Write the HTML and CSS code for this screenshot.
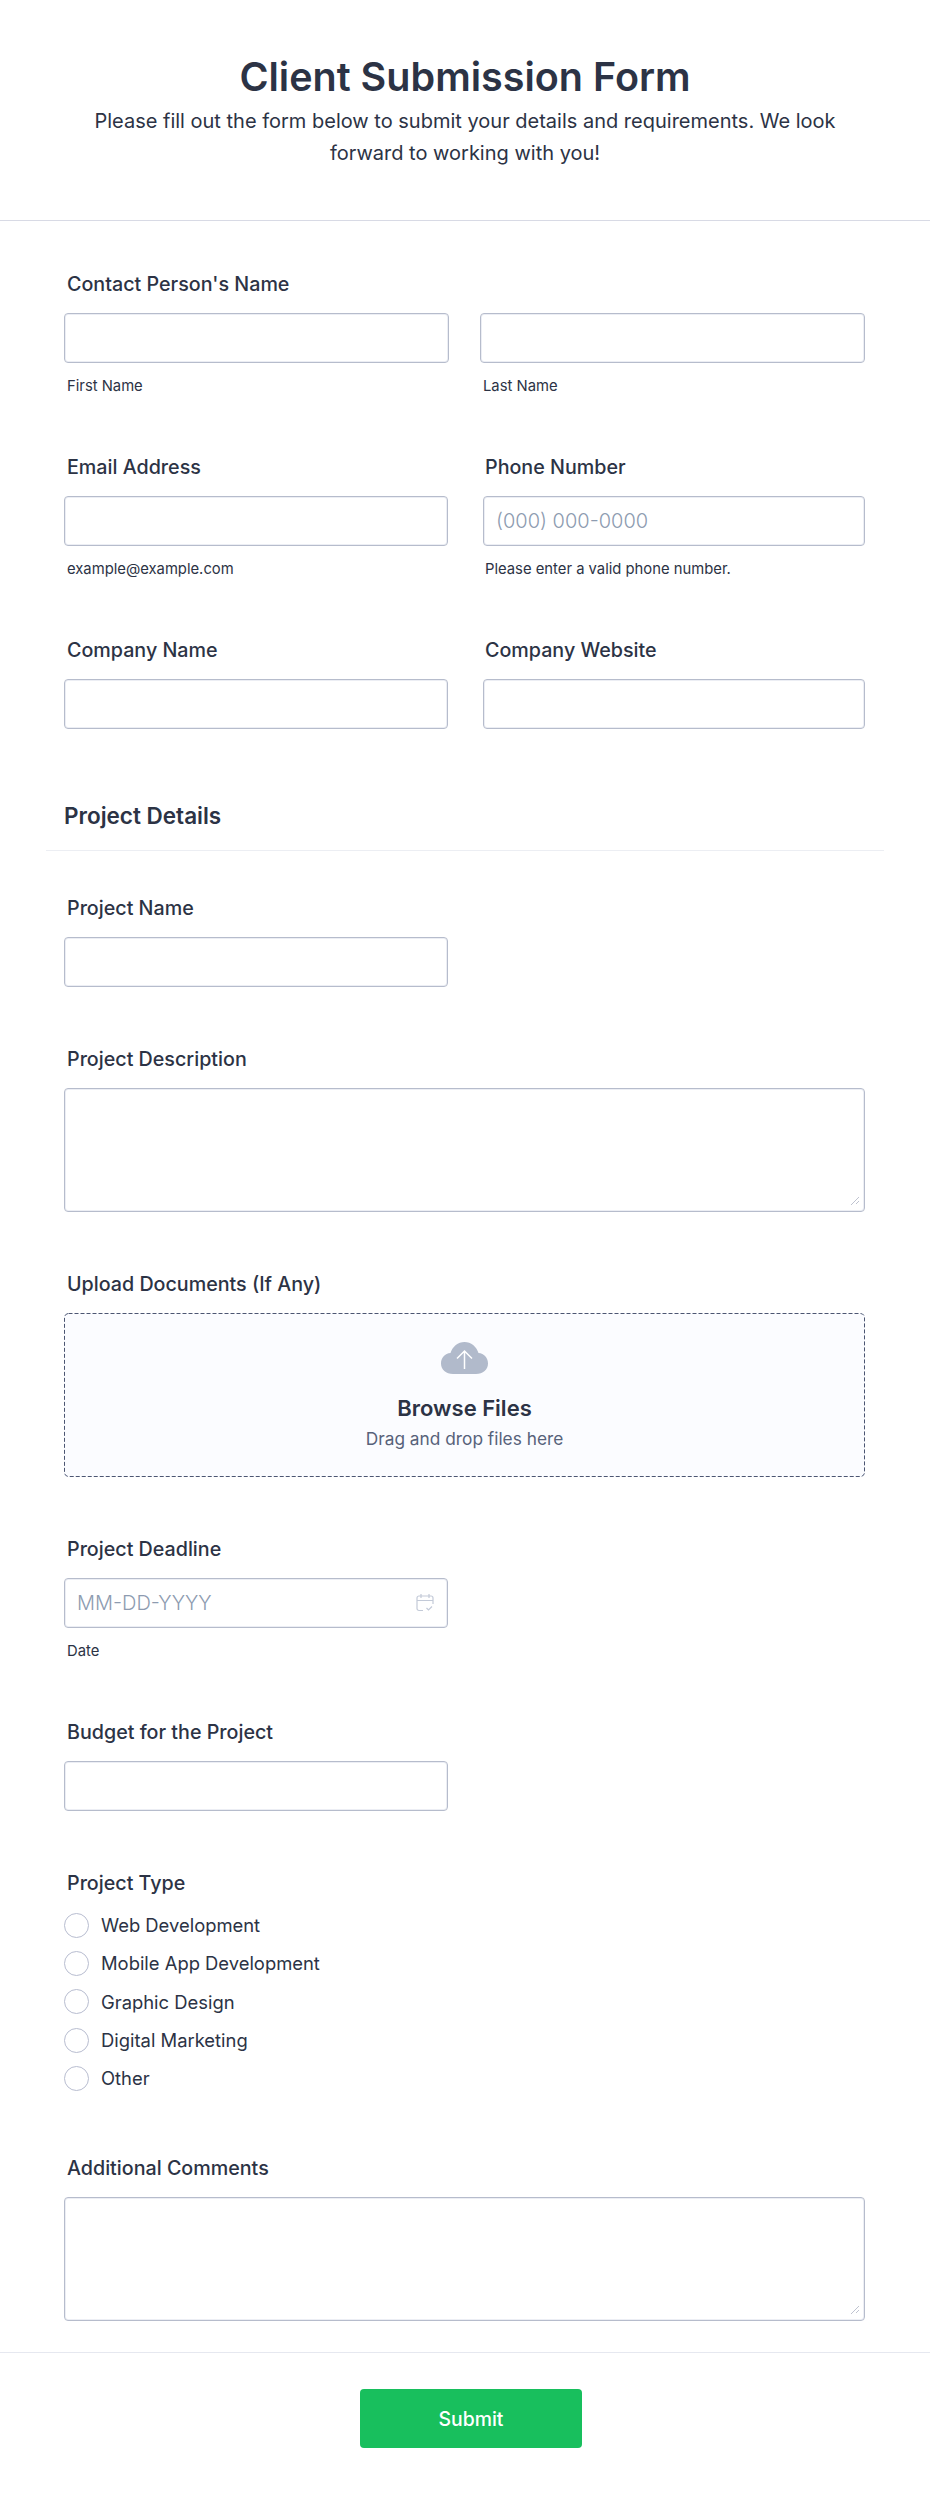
FILE: index.html
```html
<!DOCTYPE html>
<html lang="en">
<head>
    <meta charset="UTF-8">
    <title>Client Submission Form</title>
    <link rel="stylesheet" href="styles.css">
</head>
<body>
<div class="header">
    <h1>Client Submission Form</h1>
    <p>Please fill out the form below to submit your details and requirements. We look forward to working with you!</p>
</div>
<form class="form">
    <div class="field">
        <label class="label">Contact Person's Name</label>
        <div class="row row-name">
            <div>
                <input type="text" class="input">
                <span class="sub">First Name</span>
            </div>
            <div>
                <input type="text" class="input">
                <span class="sub">Last Name</span>
            </div>
        </div>
    </div>
    <div class="row">
        <div class="field">
            <label class="label">Email Address</label>
            <input type="text" class="input">
            <span class="sub">example@example.com</span>
        </div>
        <div class="field">
            <label class="label">Phone Number</label>
            <input type="text" class="input" placeholder="(000) 000-0000">
            <span class="sub">Please enter a valid phone number.</span>
        </div>
    </div>
    <div class="row">
        <div class="field">
            <label class="label">Company Name</label>
            <input type="text" class="input">
        </div>
        <div class="field">
            <label class="label">Company Website</label>
            <input type="text" class="input">
        </div>
    </div>
    <div class="section-head">
        <h2>Project Details</h2>
    </div>
    <div class="field half">
        <label class="label">Project Name</label>
        <input type="text" class="input">
    </div>
    <div class="field">
        <label class="label">Project Description</label>
        <textarea class="input area"></textarea>
    </div>
    <div class="field">
        <label class="label">Upload Documents (If Any)</label>
        <div class="drop">
            <svg class="cloud" width="47" height="32" viewBox="0 0 47 32">
                <path d="M12 32C5 32 0 27.500 0 21.500C0 15.500 4 11.500 9.500 11C11.500 4.500 17 0 23.500 0C30 0 35.500 4.500 37.500 11C43 11.500 47 15.500 47 21.500C47 27.500 42 32 35 32Z" fill="#b1bacb"/>
                <path d="M23.500 27V9M16 16.500L23.500 9L31 16.500" fill="none" stroke="#fff" stroke-width="1.500"/>
            </svg>
            <div class="drop-title">Browse Files</div>
            <div class="drop-sub">Drag and drop files here</div>
        </div>
    </div>
    <div class="field half">
        <label class="label">Project Deadline</label>
        <div class="date">
            <input type="text" class="input" placeholder="MM-DD-YYYY">
            <svg class="cal" width="18" height="19" viewBox="0 0 18 19">
                <path d="M7 17.500H3C1.900 17.500 1 16.600 1 15.500V5C1 3.900 1.900 3 3 3H15C16.100 3 17 3.900 17 5V11M1 7.500H17M5 1V5M13 1V5M10.500 15L12.500 17L16 13.500" fill="none" stroke="#c3cad8" stroke-width="1.200"/>
            </svg>
        </div>
        <span class="sub">Date</span>
    </div>
    <div class="field half">
        <label class="label">Budget for the Project</label>
        <input type="text" class="input">
    </div>
    <div class="field field-radio">
        <label class="label label-radio">Project Type</label>
        <div class="radios">
            <label class="radio"><span class="dot"></span>Web Development</label>
            <label class="radio"><span class="dot"></span>Mobile App Development</label>
            <label class="radio"><span class="dot"></span>Graphic Design</label>
            <label class="radio"><span class="dot"></span>Digital Marketing</label>
            <label class="radio"><span class="dot"></span>Other</label>
        </div>
    </div>
    <div class="field last">
        <label class="label">Additional Comments</label>
        <textarea class="input area"></textarea>
    </div>
    <div class="footer">
        <button type="button" class="submit">Submit</button>
    </div>
</form>
</body>
</html>
```

FILE: styles.css
```css
*{
    padding: 0;
    margin: 0;
    box-sizing: border-box;
}
body{
    font-family: Inter, "Liberation Sans", sans-serif;
    color: #2c3345;
    background-color: #fff;
}
.header{
    height: 221px;
    padding: 52px 64px 0;
    text-align: center;
    border-bottom: 1px solid #d8dae5;
}
.header h1{
    font-size: 39.500px;
    line-height: 50px;
    font-weight: 600;
}
.header p{
    margin-top: 3px;
    font-size: 20px;
    line-height: 32px;
    font-weight: 400;
}
.form{
    padding-top: 51px;
}
.field{
    margin: 0 65px 60px 64px;
}
.row .field{
    margin: 0;
}
.row{
    display: grid;
    grid-template-columns: 384px 382px;
    column-gap: 35px;
    margin: 0 65px 60px 64px;
}
.row-name{
    grid-template-columns: 385px 385px;
    column-gap: 31px;
    margin: 0;
}
.row .field + .field .label,
.row .field + .field .sub{
    margin-left: 2px;
}
.half{
    margin-right: 482px;
}
.label{
    display: block;
    height: 24px;
    margin: 0 0 17px 3px;
    font-size: 19.700px;
    line-height: 24px;
    font-weight: 450;
}
.input{
    display: block;
    width: 100%;
    height: 50px;
    padding: 0 12px;
    font-family: inherit;
    font-size: 20px;
    color: #2c3345;
    background-color: #fff;
    border: 1px solid #b6bccc;
    border-radius: 4px;
    box-shadow: inset 0 0 0 1px #eceef4;
    outline: none;
}
.input::placeholder{
    color: #8d9bb0;
    font-weight: 300;
}
.area{
    height: 124px;
    padding: 8px 12px;
    resize: vertical;
}
.area::-webkit-resizer{
    background: url("data:image/svg+xml,%3Csvg xmlns='http://www.w3.org/2000/svg' width='15' height='15'%3E%3Cpath d='M2 9L10 1M7 8L10 5' stroke='%23bfc3d0' fill='none'/%3E%3C/svg%3E") no-repeat;
}
.sub{
    display: block;
    height: 18px;
    margin: 14px 0 0 3px;
    font-size: 14.800px;
    line-height: 18px;
}
.section-head{
    height: 49px;
    margin: 73px 46px 45px;
    padding: 0 18px;
    border-bottom: 1px solid #eceef3;
}
.section-head h2{
    font-size: 22.500px;
    line-height: 28px;
    font-weight: 600;
}
.drop{
    height: 164px;
    padding-top: 29px;
    text-align: center;
    background: #fbfcff url("data:image/svg+xml,%3Csvg xmlns='http://www.w3.org/2000/svg' width='801' height='164'%3E%3Crect x='.5' y='.5' width='800' height='163' rx='4' fill='none' stroke='%234c5672' stroke-dasharray='4 2'/%3E%3C/svg%3E") no-repeat;
    border-radius: 4px;
}
.cloud{
    display: block;
    margin: 0 auto;
}
.drop-title{
    margin-top: 20px;
    font-size: 22px;
    line-height: 28px;
    font-weight: 600;
}
.drop-sub{
    margin-top: 5px;
    font-size: 17.300px;
    line-height: 24px;
    color: #57627a;
}
.date{
    position: relative;
}
.cal{
    position: absolute;
    right: 14px;
    top: 15px;
}
.field-radio{
    margin-bottom: 59px;
}
.label-radio{
    margin-bottom: 11px;
}
.radio{
    display: flex;
    align-items: center;
    height: 38.300px;
    font-size: 18.400px;
}
.dot{
    width: 25px;
    height: 25px;
    margin-right: 12px;
    border: 1px solid #b8bdd0;
    border-radius: 50%;
}
.last{
    margin-bottom: 0;
}
.footer{
    height: 146px;
    margin-top: 31px;
    padding-top: 36px;
    border-top: 1px solid #e6e8f0;
}
.submit{
    display: block;
    width: 222px;
    height: 59px;
    margin-left: 360px;
    font-family: inherit;
    font-size: 19.400px;
    font-weight: 500;
    color: #fff;
    background-color: #18bf5d;
    border: none;
    border-radius: 4px;
}
```
